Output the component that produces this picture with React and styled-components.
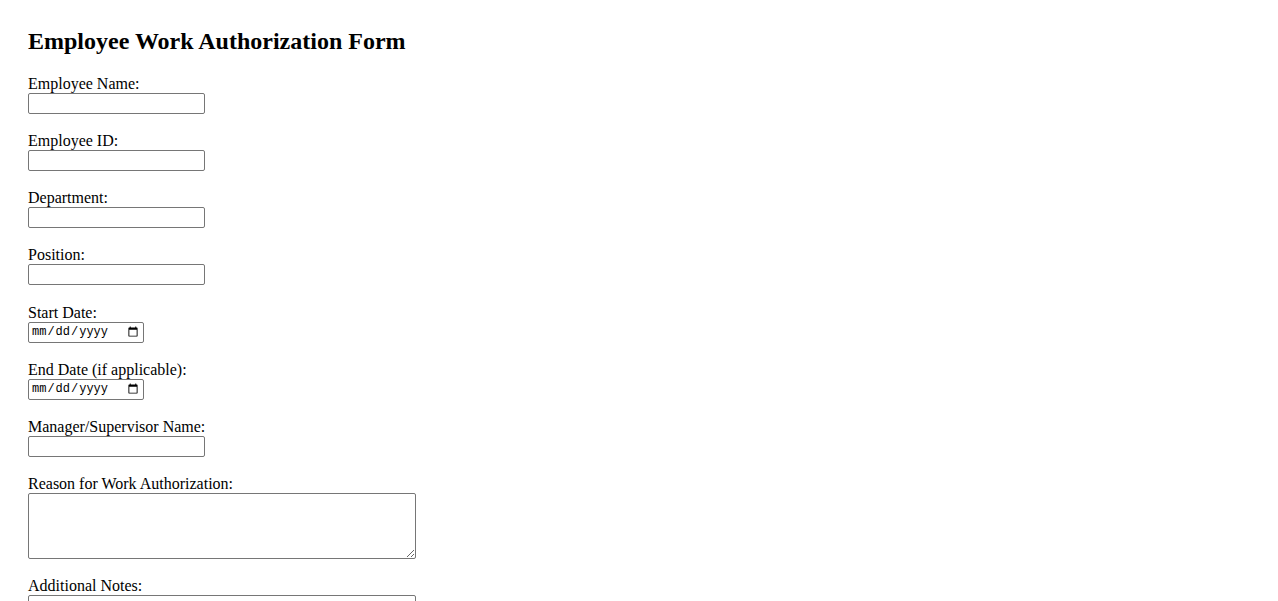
import React from "react";
import styled, { createGlobalStyle } from "styled-components";

const GlobalStyle = createGlobalStyle`
  body {
    margin: 8px;
    padding: 20px;
    background: #ffffff;
    color: #000000;
    font-family: "Liberation Serif", "Times New Roman", serif;
    font-size: 16px;
  }
`;

const Title = styled.h2`
  margin: 0 0 20px;
  font-size: 24px;
  font-weight: bold;
  line-height: 27px;
`;

const Form = styled.form`
  display: flex;
  flex-direction: column;
  align-items: flex-start;
`;

const Field = styled.div`
  display: flex;
  flex-direction: column;
  align-items: flex-start;
  margin-bottom: 18.15px;
`;

const Label = styled.label`
  display: block;
  line-height: 18px;
`;

const TextInput = styled.input`
  box-sizing: border-box;
  width: 177px;
  height: 21px;
  margin: 0;
  padding: 1px 2px;
  border: 1px solid #767676;
  border-radius: 2px;
  font-family: "Liberation Sans", Arial, sans-serif;
  font-size: 13.33px;
`;

const DateInput = styled.input`
  box-sizing: border-box;
  width: 116px;
  height: 21px;
  margin: 0;
  padding: 1px 2px;
  border: 1px solid #767676;
  border-radius: 2px;
  font-family: "Liberation Mono", "DejaVu Sans Mono", monospace;
  font-size: 12px;
  color: #000;
`;

const TextArea = styled.textarea`
  box-sizing: border-box;
  width: 388px;
  height: ${(p) => p.$height || 66}px;
  margin: 0;
  padding: 2px;
  border: 1px solid #767676;
  border-radius: 2px;
  font-family: "Liberation Mono", monospace;
  font-size: 13.33px;
`;

const textFields = [
  { id: "name", label: "Employee Name:" },
  { id: "empId", label: "Employee ID:" },
  { id: "dept", label: "Department:" },
  { id: "position", label: "Position:" },
];

const App = () => (
  <>
    <GlobalStyle />
    <Title>Employee Work Authorization Form</Title>
    <Form onSubmit={(e) => e.preventDefault()}>
      {textFields.map((f) => (
        <Field key={f.id}>
          <Label htmlFor={f.id}>{f.label}</Label>
          <TextInput id={f.id} type="text" />
        </Field>
      ))}
      <Field>
        <Label htmlFor="start">Start Date:</Label>
        <DateInput id="start" type="date" />
      </Field>
      <Field>
        <Label htmlFor="end">End Date (if applicable):</Label>
        <DateInput id="end" type="date" />
      </Field>
      <Field>
        <Label htmlFor="manager">Manager/Supervisor Name:</Label>
        <TextInput id="manager" type="text" />
      </Field>
      <Field>
        <Label htmlFor="reason">Reason for Work Authorization:</Label>
        <TextArea id="reason" />
      </Field>
      <Field>
        <Label htmlFor="notes">Additional Notes:</Label>
        <TextArea id="notes" />
      </Field>
    </Form>
  </>
);

export default App;
